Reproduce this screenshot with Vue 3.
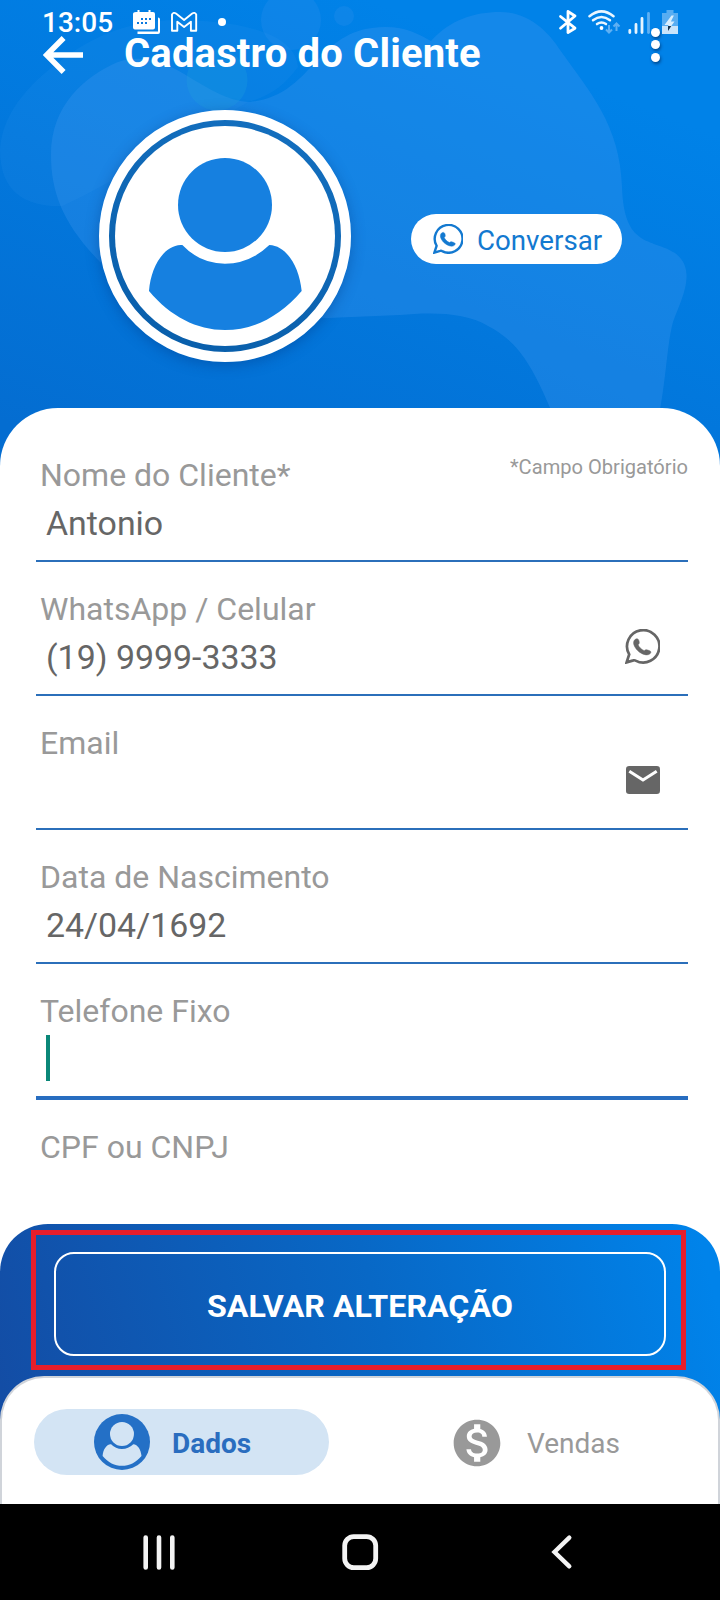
<script setup>
const fields = [
  { label: 'Nome do Cliente*', value: 'Antonio', hint: '*Campo Obrigatório' },
  { label: 'WhatsApp / Celular', value: '(19) 9999-3333', icon: 'whatsapp' },
  { label: 'Email', value: '', icon: 'mail' },
  { label: 'Data de Nascimento', value: '24/04/1692' },
  { label: 'Telefone Fixo', value: '', focused: true },
  { label: 'CPF ou CNPJ', value: '' },
]
const shoulders =
  'M302 435C250 438 213 500 207 573C272 650 350 690 435 690C520 690 600 650 665 573C658 500 620 437 568 435Q510 491 435 491Q360 491 307 435Z'
const bubble =
  'M1.6 33.4L4.2 25.4A16.2 16.2 0 1 1 10.6 31.6Q9.6 31 8.4 31.4Z'
const handset =
  'M11.6 9.8C13 9.6 13.7 10.6 14.1 12.3C14.5 13.9 14.4 14.7 13.1 15.8C14 18 16.2 20.4 19.2 21.7C20.3 20.6 21 20.5 22.6 21C25 21.8 26.2 22.4 25.9 23.4C25.2 25.5 22.6 26.3 20 25.7C14.6 24.3 10.2 20 8.8 15.4C8.1 12.8 9.2 10.2 11.6 9.8Z'
</script>

<template>
  <div class="screen">
    <header class="hero">
      <svg class="hero-art" viewBox="0 0 720 468" width="720" height="468">
        <defs>
          <linearGradient id="sky" gradientUnits="userSpaceOnUse" x1="180" y1="490" x2="370" y2="0">
            <stop offset="0" stop-color="#046dd1" />
            <stop offset="1" stop-color="#0082e8" />
          </linearGradient>
        </defs>
        <rect width="720" height="468" fill="url(#sky)" />
        <path fill="#3f98f0" opacity=".13" d="M62 206C28 207 0 194 0 150C2 110 35 78 66 57C96 34 133 21 175 20C230 20 295 30 298 67C284 86 270 96 248 102C190 135 100 190 62 206Z" />
        <path fill="#3f98f0" opacity=".31" d="M140 315C126 293 114 276 101 263C64 225 51 194 51 155C51 105 85 76 118 62C170 45 200 98 248 102C310 98 315 35 372 28C402 24 418 34 431 41C450 20 474 12 500 12C530 12 550 34 560 50C590 92 620 125 622 187C624 248 651 238 675 253C698 270 681 300 673 322C667 345 667 370 660 410L551 410C530 360 515 340 488 326C466 312 430 312 400 315L328 318Z" />
        <circle cx="291" cy="20" r="30" fill="#3f98f0" opacity=".2" />
        <circle cx="344" cy="16" r="10" fill="#3f98f0" opacity=".2" />
        <circle cx="217" cy="80" r="30.500" fill="#23a4dc" opacity=".26" />
      </svg>

      <div class="title-bar">
        <svg class="back" width="40" height="38" viewBox="0 0 40 38" fill="none" stroke="#fff" stroke-width="5.600">
          <path d="M40 19H4M20.600 2L3.600 19L20.600 36" />
        </svg>
        <h1>Cadastro do Cliente</h1>
        <div class="more"><i></i><i></i><i></i></div>
      </div>

      <div class="profile">
        <div class="avatar">
          <div class="avatar-face">
            <svg width="290" height="280" viewBox="0 0 870 840" fill="#1680e0">
              <circle cx="435" cy="315" r="141" />
              <path :d="shoulders" />
            </svg>
          </div>
        </div>
        <button class="chat">
          <svg width="30" height="30" viewBox="0 0 35 35">
            <path :d="bubble" fill="none" stroke="currentColor" stroke-width="2.800" />
            <path :d="handset" fill="currentColor" stroke="currentColor" stroke-width=".6" />
          </svg>
          <span>Conversar</span>
        </button>
      </div>

      <div class="status">
        <span class="clock">13:05</span>
        <svg class="notices" width="100" height="28" viewBox="131 8 100 28">
          <g fill="#fff">
            <path d="M136 12h1.500v-2h2v2h9v-2h2v2h2.500q2 0 2 2v13.500q0 2-2 2h-18q-2 0-2-2V14q0-2 3-2z" />
            <path d="M158 17.500q2 0 2 2v12.500q0 2-2 2h-20.500v-2.400h20.500z" />
            <circle cx="222" cy="22" r="4" />
          </g>
          <path fill="#0a79df" d="M141 18h2v2h-2zM145 18h2v2h-2zM149 18h2v2h-2zM137 22h2v2h-2zM141 22h2v2h-2zM145 22h2v2h-2z" />
          <path d="M172 14.500v16.300h5.300V21.700l6.800 5.300l6.800-5.300v9.100h5.300V14.500q-1.500-2.700-4-1l-8.100 6.400l-8.100-6.400q-2.500-1.700-4 1z" fill="none" stroke="#fff" stroke-width="1.900" stroke-linejoin="round" />
        </svg>
        <svg class="signals" width="122" height="28" viewBox="557 8 122 28" fill="none">
          <path d="M560.500 16.500L575 28.200L568 32.500V11.500L575 16L560.500 28.200" stroke="#fff" stroke-width="2.800" stroke-linecap="round" stroke-linejoin="round" />
          <g stroke="#eaf6ff" stroke-width="2.500" stroke-linecap="round">
            <path d="M589.500 16.300Q601.500 6.500 613.500 16.300" />
            <path d="M593 20.300Q601.500 13.600 610 20.300" />
            <path d="M597 24.100Q601.500 20.800 606 24.100" />
          </g>
          <circle cx="601.500" cy="28" r="1.900" fill="#fff" />
          <path d="M609 25v7M606 29.500l3 3l3-3M616.500 31v-7M613.500 26.500l3-3l3 3" stroke="#5fb0f3" stroke-width="2" />
          <g stroke="#e6f4ff" stroke-width="2.800" stroke-linecap="round">
            <path d="M629.800 30.500v2M636 24.500v8M642 18.500v14" />
            <path d="M648.500 13.500v19" stroke="#5fb0f3" />
          </g>
          <path d="M666.500 10h7v3h4.500v21h-16v-21h4.500z" fill="#58adf2" />
          <path d="M662 26h16v8h-16z" fill="#c8e4fb" />
          <path d="M671.500 15.500l-7 9.500h4l-.500 2h2.500l4-5.500h-3.600l3-6z" fill="#d9eefe" />
          <path d="M668 26h3.300l-3.300 5z" fill="#15314d" />
        </svg>
      </div>
    </header>

    <main class="sheet">
      <div v-for="f in fields" :key="f.label" class="field" :class="{ focused: f.focused }">
        <div class="field-head">
          <label>{{ f.label }}</label>
          <small v-if="f.hint">{{ f.hint }}</small>
        </div>
        <div class="field-body">
          <span>{{ f.value }}</span>
          <i v-if="f.focused" class="caret"></i>
          <svg v-if="f.icon === 'whatsapp'" class="ico-wa" width="35" height="35" viewBox="0 0 35 35">
            <path :d="bubble" fill="none" stroke="#666" stroke-width="2.700" />
            <path :d="handset" fill="#666" stroke="#666" stroke-width=".5" />
          </svg>
          <svg v-if="f.icon === 'mail'" class="ico-mail" width="34" height="28" viewBox="0 0 34 28">
            <rect width="34" height="28" rx="3.200" fill="#666" />
            <path d="M3.300 5.200L17 14L30.700 5.200" fill="none" stroke="#fff" stroke-width="3" />
          </svg>
        </div>
      </div>
    </main>

    <footer class="dock">
      <div class="highlight">
        <button class="save">SALVAR ALTERAÇÃO</button>
      </div>
      <nav class="tabs">
        <a class="tab active">
          <svg width="56" height="56" viewBox="0 0 56 56">
            <circle cx="28" cy="28" r="28" fill="#2470c6" />
            <g fill="#d3e4f4" transform="translate(-9 -6.800) scale(.085)">
              <circle cx="435" cy="315" r="141" />
              <path :d="shoulders" />
            </g>
          </svg>
          <span>Dados</span>
        </a>
        <a class="tab">
          <svg width="56" height="56" viewBox="0 0 24 24" fill="#999">
            <path d="M12 2C6.480 2 2 6.480 2 12s4.480 10 10 10 10-4.480 10-10S17.520 2 12 2zm1.410 16.090V20h-2.670v-1.930c-1.710-.36-3.160-1.460-3.270-3.400h1.960c.1 1.050.82 1.870 2.650 1.870 1.960 0 2.400-.98 2.400-1.590 0-.83-.44-1.610-2.670-2.140-2.480-.6-4.180-1.620-4.180-3.670 0-1.720 1.390-2.840 3.110-3.210V4h2.670v1.950c1.860.45 2.790 1.860 2.850 3.390H14.300c-.05-1.110-.64-1.870-2.220-1.870-1.500 0-2.400.68-2.400 1.640 0 .84.65 1.390 2.670 1.910s4.180 1.390 4.180 3.910c-.02 1.830-1.380 2.830-3.120 3.160z" />
          </svg>
          <span>Vendas</span>
        </a>
      </nav>
    </footer>

    <div class="system-nav">
      <svg width="720" height="96" viewBox="0 0 720 96" fill="none" stroke="#f4f4f4" stroke-linecap="round">
        <path d="M145.700 33.500v30M159 33.500v30M172.300 33.500v30" stroke-width="4.600" />
        <rect x="344.700" y="32.600" width="31" height="31" rx="9" stroke-width="4.800" />
        <path d="M569.300 33.700L554.500 48L569.300 62.300" stroke-width="4.400" />
      </svg>
    </div>
  </div>
</template>

<style>
body {
  margin: 0;
}
</style>

<style scoped>
.screen {
  width: 720px;
  height: 1600px;
  display: flex;
  flex-direction: column;
  overflow: hidden;
  background: #fff;
  font-family: Roboto, "Liberation Sans", sans-serif;
}
.screen svg {
  display: block;
  flex: none;
}
.hero {
  position: relative;
  height: 468px;
  flex: none;
}
.hero-art {
  position: absolute;
  inset: 0;
}
.status {
  position: absolute;
  top: 0;
  left: 0;
  width: 720px;
  height: 44px;
  padding: 0 41px 0 42px;
  box-sizing: border-box;
  display: flex;
  align-items: center;
  color: #fff;
}
.clock {
  width: 89px;
  font-size: 28px;
  line-height: 46px;
  font-weight: 500;
  height: 44px;
}
.signals {
  margin-left: auto;
}
.title-bar {
  position: relative;
  display: flex;
  align-items: center;
  height: 54px;
  padding: 27px 60px 0 43px;
}
.back {
  margin-top: 2px;
}
.title-bar h1 {
  margin: 0 0 0 41px;
  color: #fff;
  font-size: 40px;
  letter-spacing: 0.16px;
  line-height: 54px;
  font-weight: 700;
  white-space: nowrap;
}
.more {
  align-self: flex-start;
  margin: 0.5px 0 0 auto;
  display: flex;
  flex-direction: column;
  gap: 3.500px;
}
.more i {
  width: 9px;
  height: 9px;
  border-radius: 50%;
  background: #fff;
  box-shadow: 1px 2px 3px rgba(0, 40, 90, 0.6);
}
.profile {
  position: relative;
  display: flex;
  align-items: flex-start;
  padding: 29px 0 0 99px;
}
.avatar {
  box-sizing: border-box;
  width: 252px;
  height: 252px;
  border: 10px solid #fff;
  border-radius: 50%;
  background: linear-gradient(20deg, #085da9, #1470c0);
  box-shadow: 0 3px 14px rgba(0, 50, 120, 0.38);
  display: flex;
  align-items: center;
  justify-content: center;
}
.avatar-face {
  width: 220px;
  height: 220px;
  border-radius: 50%;
  background: #fff;
  display: flex;
  align-items: center;
  justify-content: center;
}
.avatar-face svg {
  margin-top: 8px;
}
.chat {
  margin: 104px 0 0 60px;
  width: 211px;
  height: 50px;
  padding: 0 0 0 22px;
  border: 0;
  border-radius: 25px;
  background: #fff;
  color: #1379d0;
  display: flex;
  align-items: center;
  gap: 14px;
  font: 400 27.700px/50px Roboto, sans-serif;
}
.chat span {
  margin-top: 3px;
}
.sheet {
  position: relative;
  box-sizing: border-box;
  height: 880px;
  margin-top: -60px;
  padding: 41px 32px 0 36px;
  border-radius: 58px 58px 0 0;
  background: #fff;
  flex: none;
}
.field {
  box-sizing: border-box;
  height: 134px;
  border-bottom: 2px solid #2b6fba;
}
.field:first-child {
  height: 113px;
}
.field + .field {
  padding-top: 21px;
}
.field.focused {
  height: 136px;
  margin-bottom: -2px;
  border-bottom: 4px solid #276dc0;
}
.field:last-child {
  padding-top: 23px;
  border: 0;
}
.field-head {
  display: flex;
  justify-content: space-between;
  padding-left: 4px;
  height: 51px;
}
.field-head label {
  color: #999;
  font-size: 32px;
  line-height: 52px;
}
.field-head small {
  color: #999;
  font-size: 20.100px;
  line-height: 36px;
}
.field-body {
  display: flex;
  align-items: center;
  height: 46px;
  padding: 0 28px 0 10px;
  color: #666;
  font-size: 33.900px;
}
.field-body span {
  margin-top: 2px;
  line-height: 46px;
}
.field-body svg {
  margin-left: auto;
}
.ico-wa {
  margin-top: -22px;
}
.ico-mail {
  margin-top: -22px;
}
.caret {
  width: 4px;
  height: 46px;
  margin-top: -2px;
  background: #0a8778;
}
.dock {
  position: relative;
  display: flex;
  flex-direction: column;
  box-sizing: border-box;
  height: 280px;
  margin-top: -64px;
  padding-top: 6px;
  border-radius: 48px 48px 0 0;
  background: linear-gradient(75deg, #134da5 4%, #0868c6 54%, #0083ea 97%);
  flex: none;
}
.highlight {
  box-sizing: border-box;
  width: 655px;
  height: 140px;
  margin-left: 31px;
  padding: 17px 15px 0 18px;
  border: 5px solid #e71e2b;
}
.save {
  display: block;
  box-sizing: border-box;
  width: 612px;
  height: 104px;
  padding: 3px 0 0;
  border: 2px solid #fff;
  border-radius: 20px;
  background: none;
  color: #fff;
  font: 700 32.200px/96px Roboto, sans-serif;
}
.tabs {
  box-sizing: border-box;
  height: 128px;
  margin-top: 6px;
  padding: 31px 32px 0;
  border: 2px solid #d0d4da;
  border-bottom: 0;
  border-radius: 44px 44px 0 0;
  background: #fff;
  display: flex;
  gap: 62px;
}
.tab {
  box-sizing: border-box;
  width: 295px;
  height: 66px;
  padding-left: 58px;
  border-radius: 33px;
  display: flex;
  align-items: center;
  gap: 22px;
  color: #999;
  font-size: 28px;
}
.tab span {
  margin-top: 2px;
}
.tab.active {
  padding-left: 60px;
  background: #d3e4f4;
  color: #2a6dbf;
  font-weight: 700;
}
.tab svg {
  margin-top: 2px;
}
.tab.active svg {
  margin-top: -1px;
}
.system-nav {
  height: 96px;
  background: #000;
  flex: none;
}
</style>
